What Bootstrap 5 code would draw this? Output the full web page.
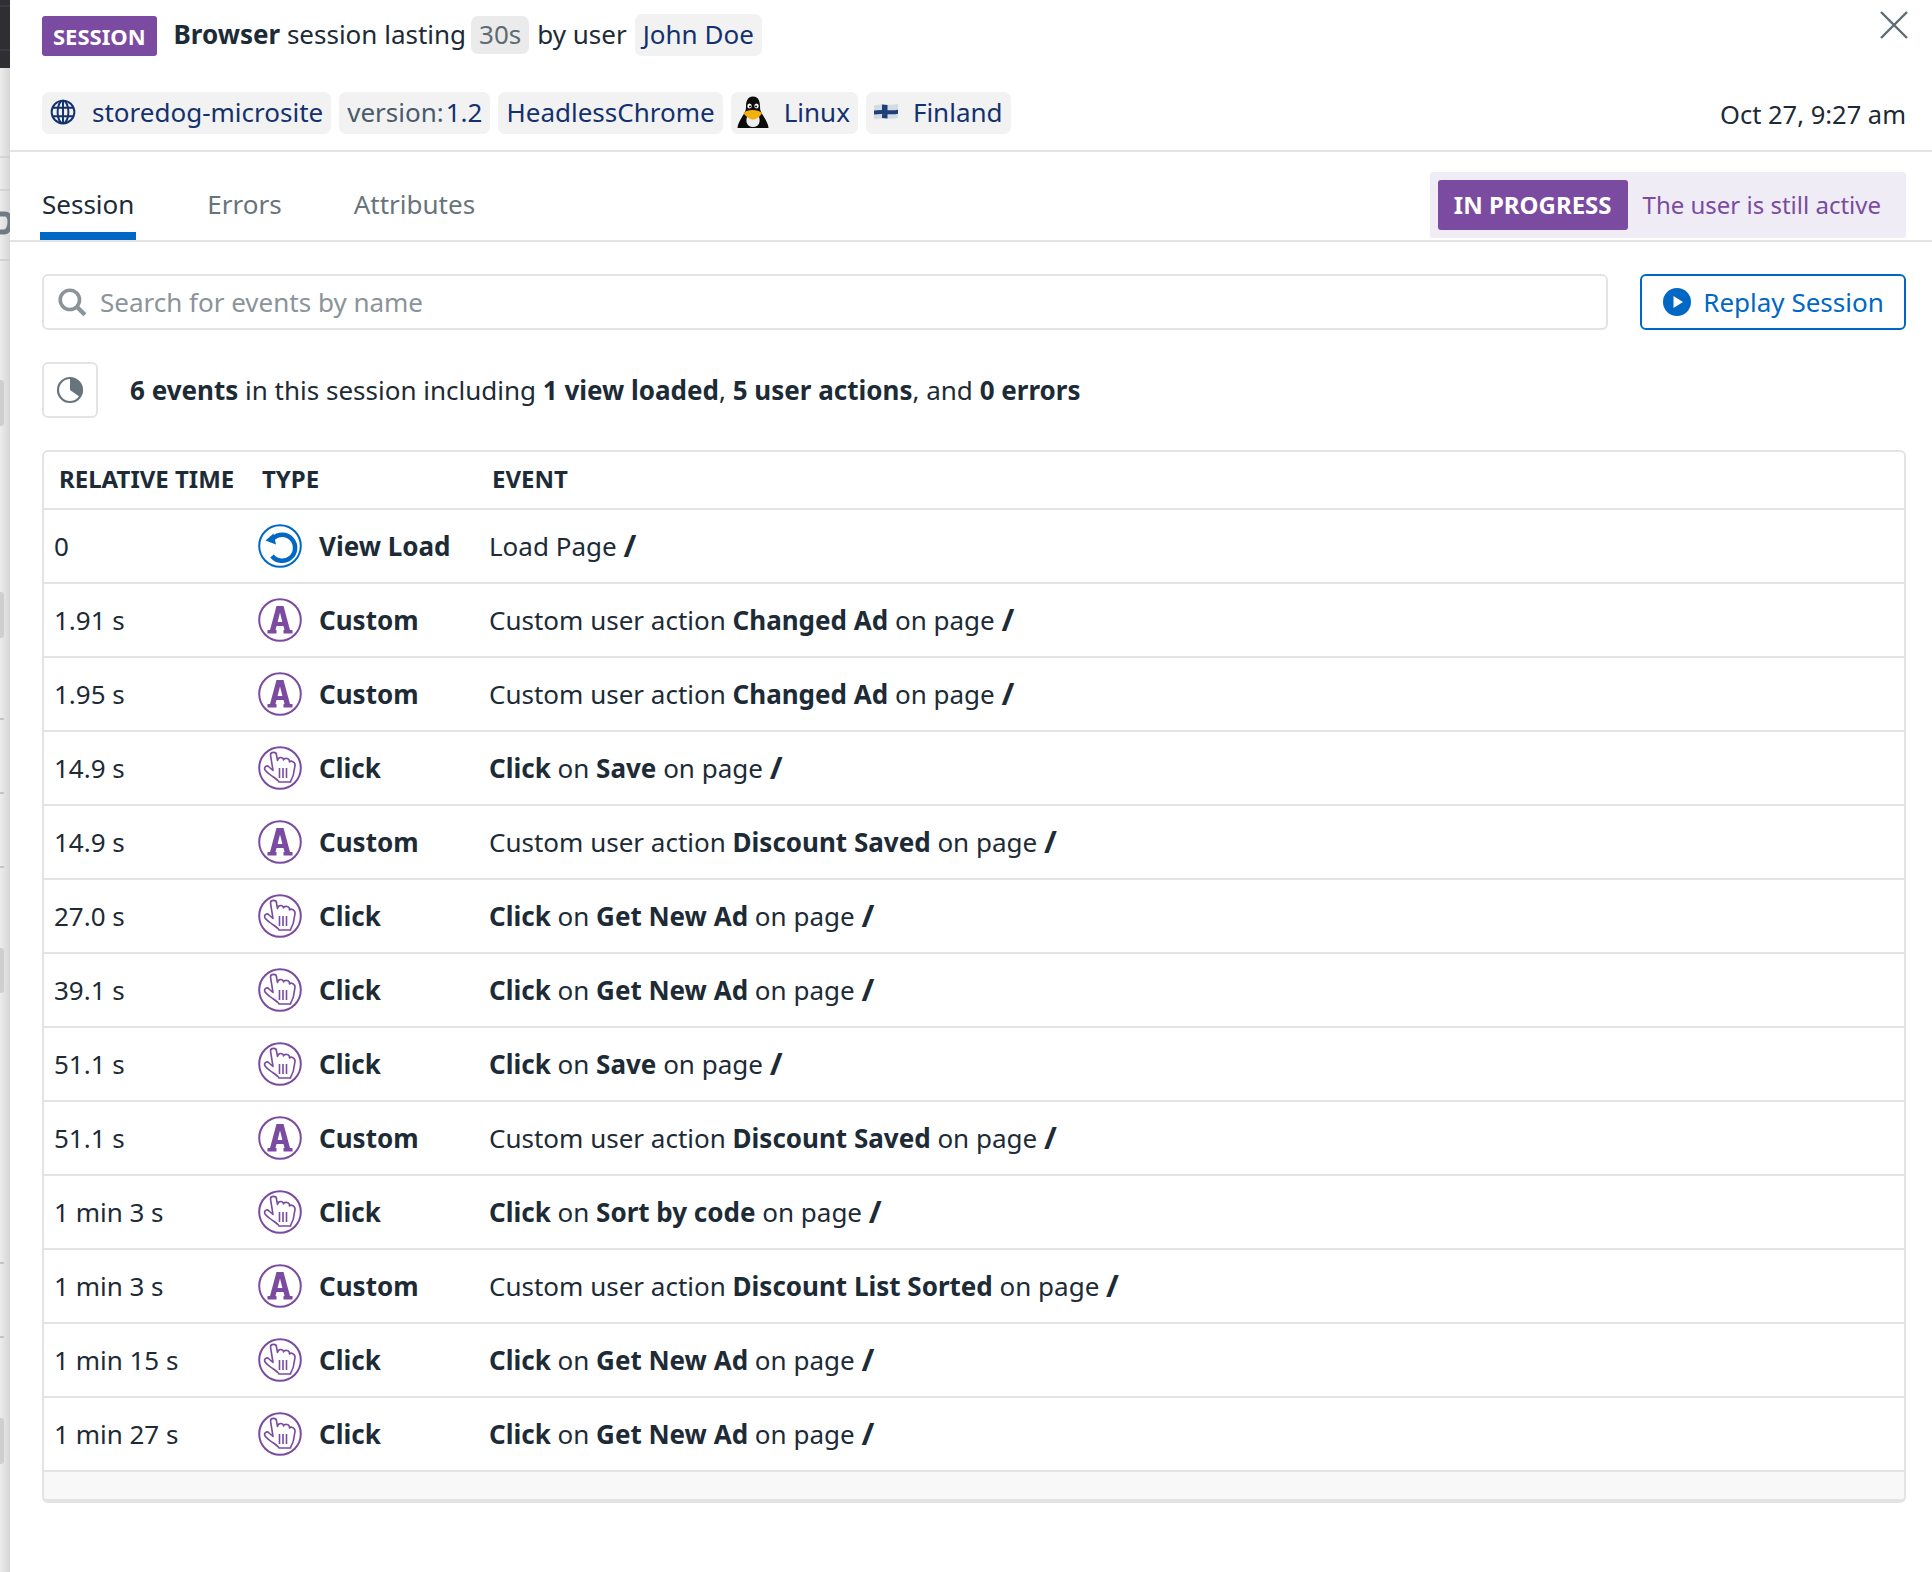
<!DOCTYPE html>
<html lang="en">
<head>
  <meta charset="UTF-8">
  <meta name="viewport" content="width=device-width, initial-scale=1.0">
  <title>Browser session</title>
  <link href="https://cdn.jsdelivr.net/npm/bootstrap@5.3.2/dist/css/bootstrap.min.css" rel="stylesheet">
  <style>
    body {
      font-family: "Noto Sans", sans-serif;
      font-size: 26px;
      line-height: 36px;
      color: #1c2b36;
      background: #fff;
      height: 1572px;
      overflow: hidden;
    }
    .side-strip { width: 10px; height: 1572px; flex: none; display: block; }
    .side-panel { flex: 1; min-width: 0; }
    .head-row { padding: 14px 23px 0 32px; height: 92px; }
    .type-tag { background: #7a4ba0; color: #fff; font-weight: 700; font-size: 22px; height: 40px; padding: 0 11px; border-radius: 3px; margin-right: 17px; margin-top: 2px; }
    .chip { background: #f2f2f2; color: #12316e; height: 42px; padding: 0 8px 2px; border-radius: 7px; white-space: nowrap; }
    .chip-grey { background: #ebebeb; color: #5e6b73; height: 38px; margin-left: -3px; }
    .chip-key { color: #4a5a6a; margin-right: 2px; }
    .head-text { padding-bottom: 2px; }
    .close-x { margin-left: auto; margin-top: -4px; }
    .tag-row { padding: 0 26px 0 32px; height: 60px; border-bottom: 2px solid #e3e3e3; }
    .tux-glyph { margin-left: -2px; margin-right: 15px; }
    .flag-glyph { margin-right: 15px; }
    .stamp { margin-left: auto; margin-top: 4px; font-size: 25.5px; }
    .tab-row { height: 90px; border-bottom: 2px solid #e3e3e3; padding: 0 26px 0 30px; }
    .tab-item { color: #68747b; padding: 16px 2px 0; height: 88px; display: flex; align-items: center; margin-right: 68px; }
    .tab-item.is-on { color: #1c2b36; border-bottom: 8px solid #0068c4; padding-top: 24px; margin-right: 69px; }
    .state-box { margin-left: auto; margin-top: 20px; height: 66px; background: #f0ecf6; border-radius: 3px; padding: 0 25px 0 8px; color: #7a4ba0; font-size: 24px; }
    .state-tag { background: #7a4ba0; color: #fff; font-weight: 700; height: 50px; padding: 0 16px; border-radius: 3px; margin-right: 15px; }
    .search-row { padding: 32px 26px 0 32px; }
    .search-box { height: 56px; border: 2px solid #e3e3e3; border-radius: 6px; color: #8a9499; padding: 0 13px; flex: 1; }
    .search-glyph { margin-right: 13px; }
    .replay-btn { width: 266px; height: 56px; margin-left: 32px; border: 2px solid #0068c4; border-radius: 6px; color: #0068c4; font-size: 26px; line-height: 36px; background: #fff; padding: 0 3px 0 4px; }
    .play-glyph { margin-right: 12px; }
    .summary-row { padding: 32px 26px 0 32px; height: 120px; }
    .pie-box { width: 56px; height: 56px; border: 2px solid #e3e3e3; border-radius: 6px; margin-right: 32px; }
    .summary-text { padding-top: 10px; }
    .table-wrap { margin: 0 26px 0 32px; border: 2px solid #e3e3e3; border-bottom-width: 4px; border-radius: 6px; overflow: hidden; }
    .event-table { table-layout: fixed; margin: 0; width: 100%; }
    .event-table th, .event-table td { padding: 0 0 0 10px; height: 74px; vertical-align: middle; border-bottom: 2px solid #e3e3e3; color: #1c2b36; font-size: 26px; line-height: 36px; }
    .event-table th { height: 57px; font-size: 24px; font-weight: 700; padding: 0 0 2px 15px; }
    .event-table .type-cell { padding-left: 11px; }
    .event-table .ev { padding-left: 12px; }
    .ev b:last-child { font-size: 31px; line-height: 1; vertical-align: -1px; }
    .type-label { font-weight: 700; margin-left: 17px; }
    .table-foot { height: 27px; background: #f8f8f8; }
  </style>
</head>
<body>
  <svg width="0" height="0" class="position-absolute">
    <symbol id="ic-load" viewBox="0 0 44 44">
      <circle cx="22" cy="22" r="20.8" fill="none" stroke="#0068c4" stroke-width="2"/>
      <path d="M15 14.5 A13 13 0 1 1 14 32" fill="none" stroke="#0068c4" stroke-width="4.5"/>
      <path d="M7.5 16.5 L15.5 9.5 L18 20.5 Z" fill="#0068c4"/>
    </symbol>
    <symbol id="ic-custom" viewBox="0 0 44 44">
      <circle cx="22" cy="22" r="20.8" fill="none" stroke="#7a4ba0" stroke-width="2"/>
      <path d="M18.5 8 H25.5 L32 32 H34.5 V35.5 H25.5 V32 H26.5 L25.5 28 H18.5 L17.5 32 H18.5 V35.5 H9.5 V32 H12 Z M19.6 24 H24.4 L22 14.5 Z" fill="#7a4ba0" fill-rule="evenodd"/>
    </symbol>
    <symbol id="ic-click" viewBox="0 0 44 44">
      <circle cx="22" cy="22" r="20.8" fill="none" stroke="#7a4ba0" stroke-width="2"/>
      <path d="M12.5 9 C12.5 5.5 18.5 5.5 18.5 9 L19.5 14.5 C20 10.5 25.5 10.5 25.5 14 C26.5 11.5 32 12 31.5 16 C33 14 37.5 16 37 19.5 L35.5 28 C35 32 33 33 32.5 36 H21 C20 33 12 30 7 24 C5.5 21 9 18.5 11 21 L15 24.5 Z" fill="none" stroke="#7a4ba0" stroke-width="1.6" stroke-linejoin="round"/>
      <path d="M21.5 22 V32 M25 22 V32 M28.5 22 V32" fill="none" stroke="#7a4ba0" stroke-width="1.6"/>
    </symbol>
  </svg>

  <div class="d-flex">
    <svg class="side-strip" viewBox="0 0 10 1572">
      <defs><linearGradient id="strip-shade"><stop offset="0" stop-color="#ececec"/><stop offset="1" stop-color="#d6d6d6"/></linearGradient></defs>
      <rect width="10" height="1572" fill="url(#strip-shade)"/>
      <rect width="10" height="68" fill="#2f2f33"/>
      <path d="M0 6 H10 M0 50 H10" stroke="#45454a"/>
      <path d="M0 157 H10 M0 190 H10 M0 260 H10" stroke="#c2c2c2"/>
      <path d="M0 214 H5 C9 214 10 218 10 222 C10 227 8 232 4 232 H0" fill="none" stroke="#6f7b82" stroke-width="5"/>
      <path d="M0 719 H4 M0 793 H4 M0 867 H4 M0 1263 H4 M0 1337 H4" stroke="#c4c4c4" stroke-width="2"/>
      <g fill="#cfcfcf"><rect x="-4" y="380" width="8" height="46" rx="3"/><rect x="-4" y="592" width="8" height="46" rx="3"/><rect x="-4" y="948" width="8" height="45" rx="3"/><rect x="-4" y="1418" width="8" height="46" rx="3"/></g>
    </svg>
    <div class="side-panel">
      <div class="head-row d-flex align-items-start">
        <span class="type-tag d-flex align-items-center">SESSION</span>
        <span class="d-flex align-items-center gap-2">
          <span class="head-text"><b>Browser</b> session lasting</span>
          <span class="chip chip-grey d-inline-flex align-items-center">30s</span>
          <span class="head-text">by user</span>
          <span class="chip d-inline-flex align-items-center">John Doe</span>
        </span>
        <svg class="close-x" width="30" height="30" viewBox="0 0 30 30"><path d="M2 2 L28 28 M28 2 L2 28" stroke="#5e6b73" stroke-width="2.4" fill="none"/></svg>
      </div>

      <div class="tag-row d-flex align-items-start">
        <div class="d-flex gap-2">
          <span class="chip d-inline-flex align-items-center">
            <svg class="me-3" width="26" height="28" viewBox="0 0 24 24"><g fill="none" stroke="#12316e" stroke-width="1.8"><circle cx="12" cy="12" r="10.5"/><ellipse cx="12" cy="12" rx="5" ry="10.5"/><path d="M12 1.5 V22.5 M2 8 H22 M2 16 H22"/></g></svg>
            storedog-microsite
          </span>
          <span class="chip d-inline-flex align-items-center"><span class="chip-key">version:</span>1.2</span>
          <span class="chip d-inline-flex align-items-center">HeadlessChrome</span>
          <span class="chip d-inline-flex align-items-center">
            <svg class="tux-glyph" width="32" height="33" viewBox="0 0 32 33">
              <path d="M16 0.5 C10 0.5 9 6 9 11 C9 15 7.5 17 5 21 C2.5 25 0.5 29 0.5 32 H31.5 C31.5 29 29.5 25 27 21 C24.5 17 23 15 23 11 C23 6 22 0.5 16 0.5 Z" fill="#0c0c0c"/>
              <path d="M10 21 C12 18 20 18 22 21 C23.5 25 22.5 31 16 31 C9.5 31 8.5 25 10 21 Z" fill="#eeeeee"/>
              <ellipse cx="12.5" cy="10" rx="2.2" ry="2.6" fill="#fff"/><ellipse cx="19.5" cy="10" rx="2.2" ry="2.6" fill="#fff"/>
              <circle cx="13" cy="10.5" r="1" fill="#0c0c0c"/><circle cx="19" cy="10.5" r="1" fill="#0c0c0c"/>
              <path d="M6.5 17 C10 13 21 13 25 17 C23 21 19 23.5 16 23.5 C13 23.5 9 21 6.5 17 Z" fill="#f2b111"/>
            </svg>
            Linux
          </span>
          <span class="chip d-inline-flex align-items-center">
            <svg class="flag-glyph" width="24" height="18" viewBox="0 0 24 18">
              <path d="M0 2.5 C8 0 16 3 24 1 V15 C16 17 8 14 0 16.5 Z" fill="#d3dbe5"/>
              <path d="M0 7.6 C8 5.8 16 8.3 24 6.8 V10.8 C16 12.3 8 9.8 0 11.6 Z M8 1.5 L13.5 2 V15.5 L8 15 Z" fill="#1e3f78"/>
            </svg>
            Finland
          </span>
        </div>
        <span class="stamp">Oct 27, 9:27 am</span>
      </div>

      <div class="tab-row d-flex align-items-start">
        <div class="tab-item is-on">Session</div>
        <div class="tab-item">Errors</div>
        <div class="tab-item">Attributes</div>
        <div class="state-box d-flex align-items-center">
          <span class="state-tag d-flex align-items-center">IN PROGRESS</span>
          <span>The user is still active</span>
        </div>
      </div>

      <div class="search-row d-flex">
        <div class="search-box d-flex align-items-center">
          <svg class="search-glyph" width="30" height="30" viewBox="0 0 28 28"><circle cx="12" cy="12" r="9" fill="none" stroke="#8a9499" stroke-width="3.4"/><path d="M18.5 18.5 L26 26" stroke="#8a9499" stroke-width="4"/></svg>
          Search for events by name
        </div>
        <button type="button" class="btn replay-btn d-flex align-items-center justify-content-center">
          <svg class="play-glyph" width="28" height="28" viewBox="0 0 28 28"><circle cx="14" cy="14" r="14" fill="#0068c4"/><path d="M10.5 8 L20 14 L10.5 20 Z" fill="#fff"/></svg>
          Replay Session
        </button>
      </div>

      <div class="summary-row d-flex align-items-start">
        <div class="pie-box d-flex align-items-center justify-content-center flex-none">
          <svg width="28" height="28" viewBox="0 0 28 28"><circle cx="14" cy="14" r="12" fill="none" stroke="#68747b" stroke-width="2.2"/><path d="M14 2 A12 12 0 0 1 26 14 L14 14 Z M14 14 L26 14 A12 12 0 0 1 24 21 Z" fill="#68747b"/></svg>
        </div>
        <div class="summary-text"><b>6 events</b> in this session including <b>1 view loaded</b>, <b>5 user actions</b>, and <b>0 errors</b></div>
      </div>

      <div class="table-wrap">
        <table class="table event-table">
          <colgroup><col style="width:203px"><col style="width:230px"><col></colgroup>
          <thead>
            <tr><th>RELATIVE TIME</th><th>TYPE</th><th>EVENT</th></tr>
          </thead>
          <tbody>
            <tr><td>0</td><td class="type-cell"><span class="d-flex align-items-center"><svg width="44" height="44"><use href="#ic-load"/></svg><span class="type-label">View Load</span></span></td><td class="ev">Load Page <b>/</b></td></tr>
            <tr><td>1.91 s</td><td class="type-cell"><span class="d-flex align-items-center"><svg width="44" height="44"><use href="#ic-custom"/></svg><span class="type-label">Custom</span></span></td><td class="ev">Custom user action <b>Changed Ad</b> on page <b>/</b></td></tr>
            <tr><td>1.95 s</td><td class="type-cell"><span class="d-flex align-items-center"><svg width="44" height="44"><use href="#ic-custom"/></svg><span class="type-label">Custom</span></span></td><td class="ev">Custom user action <b>Changed Ad</b> on page <b>/</b></td></tr>
            <tr><td>14.9 s</td><td class="type-cell"><span class="d-flex align-items-center"><svg width="44" height="44"><use href="#ic-click"/></svg><span class="type-label">Click</span></span></td><td class="ev"><b>Click</b> on <b>Save</b> on page <b>/</b></td></tr>
            <tr><td>14.9 s</td><td class="type-cell"><span class="d-flex align-items-center"><svg width="44" height="44"><use href="#ic-custom"/></svg><span class="type-label">Custom</span></span></td><td class="ev">Custom user action <b>Discount Saved</b> on page <b>/</b></td></tr>
            <tr><td>27.0 s</td><td class="type-cell"><span class="d-flex align-items-center"><svg width="44" height="44"><use href="#ic-click"/></svg><span class="type-label">Click</span></span></td><td class="ev"><b>Click</b> on <b>Get New Ad</b> on page <b>/</b></td></tr>
            <tr><td>39.1 s</td><td class="type-cell"><span class="d-flex align-items-center"><svg width="44" height="44"><use href="#ic-click"/></svg><span class="type-label">Click</span></span></td><td class="ev"><b>Click</b> on <b>Get New Ad</b> on page <b>/</b></td></tr>
            <tr><td>51.1 s</td><td class="type-cell"><span class="d-flex align-items-center"><svg width="44" height="44"><use href="#ic-click"/></svg><span class="type-label">Click</span></span></td><td class="ev"><b>Click</b> on <b>Save</b> on page <b>/</b></td></tr>
            <tr><td>51.1 s</td><td class="type-cell"><span class="d-flex align-items-center"><svg width="44" height="44"><use href="#ic-custom"/></svg><span class="type-label">Custom</span></span></td><td class="ev">Custom user action <b>Discount Saved</b> on page <b>/</b></td></tr>
            <tr><td>1 min 3 s</td><td class="type-cell"><span class="d-flex align-items-center"><svg width="44" height="44"><use href="#ic-click"/></svg><span class="type-label">Click</span></span></td><td class="ev"><b>Click</b> on <b>Sort by code</b> on page <b>/</b></td></tr>
            <tr><td>1 min 3 s</td><td class="type-cell"><span class="d-flex align-items-center"><svg width="44" height="44"><use href="#ic-custom"/></svg><span class="type-label">Custom</span></span></td><td class="ev">Custom user action <b>Discount List Sorted</b> on page <b>/</b></td></tr>
            <tr><td>1 min 15 s</td><td class="type-cell"><span class="d-flex align-items-center"><svg width="44" height="44"><use href="#ic-click"/></svg><span class="type-label">Click</span></span></td><td class="ev"><b>Click</b> on <b>Get New Ad</b> on page <b>/</b></td></tr>
            <tr><td>1 min 27 s</td><td class="type-cell"><span class="d-flex align-items-center"><svg width="44" height="44"><use href="#ic-click"/></svg><span class="type-label">Click</span></span></td><td class="ev"><b>Click</b> on <b>Get New Ad</b> on page <b>/</b></td></tr>
          </tbody>
        </table>
        <div class="table-foot"></div>
      </div>
    </div>
  </div>
</body>
</html>
